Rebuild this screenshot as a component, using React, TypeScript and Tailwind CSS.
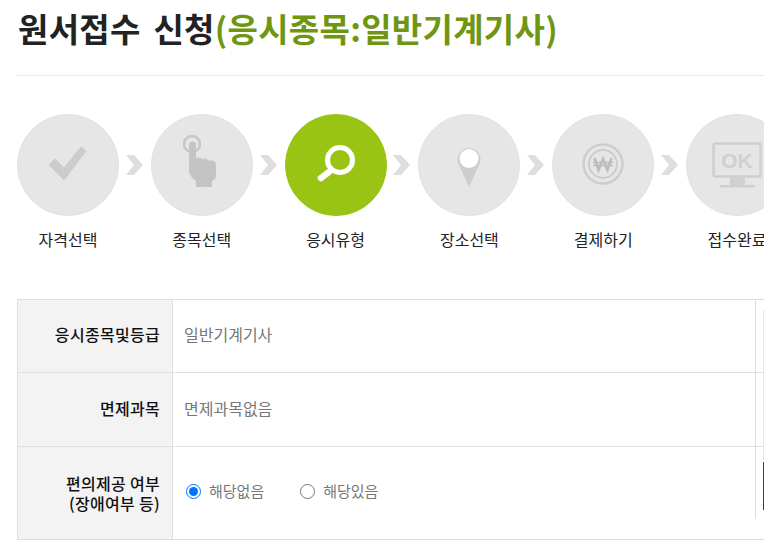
import React from 'react';

const font = { fontFamily: '"Noto Sans CJK KR", "Noto Sans", sans-serif' };

const CheckIcon = () => (
  <svg width="40" height="37" viewBox="0 0 40 37" className="mb-[4px]">
    <path d="M1 20 L7 14 L16 23 L33 2 L38 6 L16 35 Z" fill="#cccccc" stroke="#cccccc" strokeWidth="1" strokeLinejoin="round" />
  </svg>
);

const HandIcon = () => (
  <svg width="34" height="52" viewBox="0 0 34 52" className="mb-[9px] mr-[4px]">
    <circle cx="9" cy="9" r="8" fill="none" stroke="#c6c6c6" strokeWidth="2.5" />
    <path d="M6 10 a3.5 3.5 0 0 1 7 0 V23 L17 22.5 L19 24 L23 23.5 L25 25.5 L29 25.5 Q33 26 33 30 V41 Q33 44 29 46 V52 H13 V46 Q8 43 6 37 Z" fill="#c4c4c4" />
  </svg>
);

const SearchIcon = () => (
  <svg width="40" height="40" viewBox="0 0 40 40" className="mb-[2px]">
    <circle cx="24" cy="16" r="12.5" fill="none" stroke="#ffffff" strokeWidth="5" />
    <path d="M13 28 L5 34" stroke="#ffffff" strokeWidth="6.5" strokeLinecap="round" />
  </svg>
);

const PinIcon = () => (
  <svg width="24" height="40" viewBox="0 0 24 40" className="mt-[4px]">
    <path d="M12 40 L2.5 19 A11.5 11.5 0 1 1 21.5 19 Z" fill="#cdcdcd" />
    <circle cx="12" cy="11.5" r="9.5" fill="#ffffff" />
  </svg>
);

const WonIcon = () => (
  <svg width="42" height="42" viewBox="0 0 42 42" className="mb-[2px]">
    <circle cx="21" cy="21" r="19.5" fill="none" stroke="#cdcdcd" strokeWidth="2.5" />
    <circle cx="21" cy="21" r="14" fill="none" stroke="#cdcdcd" strokeWidth="2" />
    <path d="M12.5 15 L16.5 27 L21 16 L25.5 27 L29.5 15" fill="none" stroke="#bdbdbd" strokeWidth="2.6" />
    <path d="M11 19.5 H31 M11 22.5 H31" fill="none" stroke="#bdbdbd" strokeWidth="1.5" />
  </svg>
);

const MonitorIcon = () => (
  <svg width="50" height="46" viewBox="0 0 50 46" className="mb-[1px]">
    <rect x="1.5" y="1.5" width="47" height="33" rx="2" fill="none" stroke="#cfcfcf" strokeWidth="2.5" />
    <text x="25" y="26" textAnchor="middle" fontFamily='"Liberation Sans", sans-serif' fontWeight="700" fontSize="21" fill="#d0d0d0">OK</text>
    <rect x="18" y="35" width="15" height="8" fill="#d0d0d0" />
    <rect x="8" y="43" width="35" height="2.5" fill="#cfcfcf" />
  </svg>
);

const steps = [
  { label: '자격선택', icon: <CheckIcon /> },
  { label: '종목선택', icon: <HandIcon /> },
  { label: '응시유형', icon: <SearchIcon />, active: true },
  { label: '장소선택', icon: <PinIcon /> },
  { label: '결제하기', icon: <WonIcon /> },
  { label: '접수완료', icon: <MonitorIcon /> },
];

const Chevron = () => (
  <svg width="18" height="20" viewBox="0 0 18 20" className="shrink-0 mt-[41px]">
    <path d="M0 0 H8 L17 10 L8 20 H0 L8 10 Z" fill="#dedede" />
  </svg>
);

const App = () => {
  return (
    <div className="w-[764px] h-[545px] overflow-hidden bg-white relative" style={font}>
      <div className="ml-4 border-b border-[#e9e9e9] h-[76px]">
        <h1 className="pl-[2px] pt-[6px] text-[33px] leading-[44px] font-bold text-[#222222] whitespace-nowrap tracking-[0.3px] [word-spacing:5px]">
          원서접수 신청<span className="text-[#6f9611]">(응시종목:일반기계기사)</span>
        </h1>
      </div>

      <div className="flex pl-[17px] pt-[38px] w-[900px]">
        {steps.map((s, i) => (
          <React.Fragment key={s.label}>
            <div className="w-[102px] shrink-0 flex flex-col items-center">
              <div
                className={`w-[102px] h-[102px] rounded-full flex items-center justify-center border ${
                  s.active ? 'bg-[#9ac414] border-[#9ac414]' : 'bg-[#e6e6e6] border-[#e2e2e2]'
                }`}
              >
                {s.icon}
              </div>
              <div className="mt-[12px] text-[16px] leading-[22px] text-[#222222] whitespace-nowrap">{s.label}</div>
            </div>
            {i < steps.length - 1 && (
              <div className="w-[31.8px] shrink-0 flex justify-center">
                <Chevron />
              </div>
            )}
          </React.Fragment>
        ))}
      </div>

      <div className="ml-[17px] mt-[49px] w-[747px] border-t border-b border-[#dddddd] text-[16px]">
        <div className="flex h-[73px] border-b border-[#e0e0e0]">
          <div className="w-[156px] shrink-0 bg-[#f3f3f3] border-x border-[#e0e0e0] flex items-center justify-end pr-[12px] pb-[5px] font-medium text-[#111111] tracking-[0.3px]">
            응시종목및등급
          </div>
          <div className="flex items-center pl-[11px] pb-[5px] text-[#777777]">일반기계기사</div>
        </div>
        <div className="flex h-[74px] border-b border-[#e0e0e0]">
          <div className="w-[156px] shrink-0 bg-[#f3f3f3] border-x border-[#e0e0e0] flex items-center justify-end pr-[12px] pb-[3px] font-medium text-[#111111] tracking-[0.3px]">
            면제과목
          </div>
          <div className="flex items-center pl-[11px] pb-[3px] text-[#777777]">면제과목없음</div>
        </div>
        <div className="flex h-[92px]">
          <div className="w-[156px] shrink-0 bg-[#f3f3f3] border-x border-[#e0e0e0] flex items-center justify-end pr-[12px] font-medium text-[#111111] text-right leading-[20px] tracking-[0.3px]">
            편의제공 여부
            <br />
            (장애여부 등)
          </div>
          <div className="flex items-center pl-[13px] pb-[3px] text-[15px] text-[#777777]">
            <label className="flex items-center gap-[8px]">
              <input type="radio" name="aid" defaultChecked className="w-[15px] h-[15px] m-0 accent-[#0075ff]" />
              해당없음
            </label>
            <label className="flex items-center gap-[8px] ml-[36px]">
              <input type="radio" name="aid" className="w-[15px] h-[15px] m-0" />
              해당있음
            </label>
          </div>
        </div>
      </div>

      {/* right edge of the inner frame */}
      <div className="absolute left-[755px] top-[299px] w-px h-[220px] bg-[#dddddd]" />
      <div className="absolute left-[763px] top-[310px] w-px h-[150px] bg-[#dfe9f0]" />
      <div className="absolute left-[763px] top-[462px] w-px h-[48px] bg-[#2b3a66]" />
    </div>
  );
};

export default App;
